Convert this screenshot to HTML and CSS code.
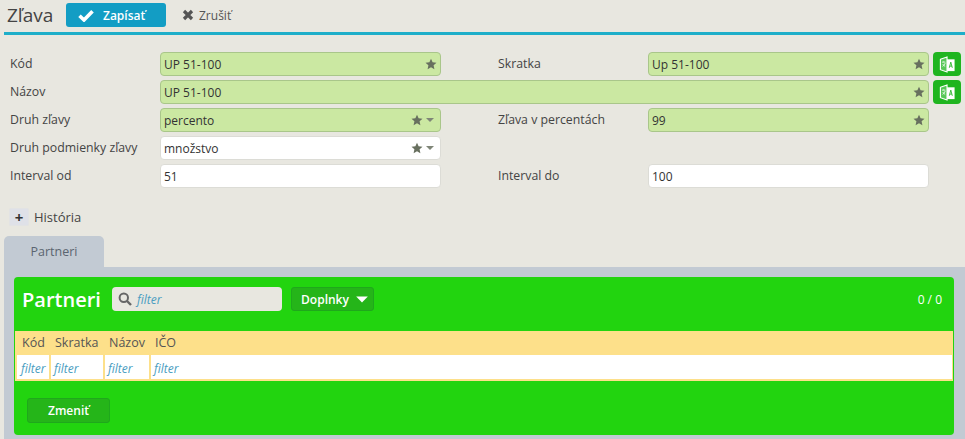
FILE: index.html
```html
<!DOCTYPE html>
<html lang="sk">
<head>
<meta charset="utf-8">
<title>Zľava</title>
<link rel="stylesheet" href="styles.css">
</head>
<body>
<svg class="defs" width="0" height="0" aria-hidden="true">
  <defs>
    <symbol id="star" viewBox="0 0 24 24"><path d="M12 1.5l3.2 7.1 7.8.8-5.8 5.2 1.6 7.7L12 18.4l-6.8 3.9 1.6-7.7L1 9.4l7.8-.8z"/></symbol>
    <symbol id="caret" viewBox="0 0 10 6"><path d="M0 .5h10L5 5.5z"/></symbol>
    <symbol id="lang" viewBox="0 0 18 18"><path d="M1.5 3.5L8.5 1V17L1.5 14.5z" fill="#fff" fill-opacity=".25" stroke="#fff" stroke-width="1.2"/><path d="M8.5 3.5H16.5V16H8.5z" fill="#fff"/><path d="M3.2 6.5h3.6M5 5.7v.8M3.7 11c1.5-.8 2.5-2.2 2.8-3.6M4 8.5c.5 1.2 1.4 2 2.5 2.5" fill="none" stroke="#fff" stroke-width=".8"/><path d="M10.9 12.5l1.6-6 1.6 6M11.4 10.7h2.2" fill="none" stroke="#1fb51f" stroke-width=".9"/></symbol>
  </defs>
</svg>
<header class="topbar">
  <h1 class="title">Zľava</h1>
  <button class="btn-save" type="button">
    <svg class="icon-check" viewBox="0 0 16 13"><path d="M1.5 6.8L6 11 14.5 2.2" fill="none" stroke="#fff" stroke-width="3.6"/></svg>
    <span>Zapísať</span>
  </button>
  <button class="btn-cancel" type="button">
    <svg class="icon-x" viewBox="0 0 12 12"><path d="M2 2l8 8M10 2l-8 8" fill="none" stroke="#555" stroke-width="3.2"/></svg>
    <span>Zrušiť</span>
  </button>
</header>

<main class="form">
  <label class="lbl">Kód</label>
  <div class="field req"><span class="val">UP 51-100</span><svg class="star"><use href="#star"/></svg></div>
  <label class="lbl col3">Skratka</label>
  <div class="field req"><span class="val">Up 51-100</span><svg class="star"><use href="#star"/></svg></div>
  <button class="btn-lang" type="button"><svg class="lang"><use href="#lang"/></svg></button>

  <label class="lbl">Názov</label>
  <div class="field req span4"><span class="val">UP 51-100</span><svg class="star"><use href="#star"/></svg></div>
  <button class="btn-lang" type="button"><svg class="lang"><use href="#lang"/></svg></button>

  <label class="lbl">Druh zľavy</label>
  <div class="field req"><span class="val">percento</span><svg class="star"><use href="#star"/></svg><svg class="caret"><use href="#caret"/></svg></div>
  <label class="lbl col3">Zľava v percentách</label>
  <div class="field req"><span class="val">99</span><svg class="star"><use href="#star"/></svg></div>
  <span class="end"></span>

  <label class="lbl">Druh podmienky zľavy</label>
  <div class="field"><span class="val">množstvo</span><svg class="star"><use href="#star"/></svg><svg class="caret"><use href="#caret"/></svg></div>
  <span class="end-row"></span>

  <label class="lbl">Interval od</label>
  <div class="field"><span class="val">51</span></div>
  <label class="lbl col3">Interval do</label>
  <div class="field"><span class="val">100</span></div>
  <span class="end"></span>
</main>

<div class="history">
  <span class="plus">+</span>
  <span class="history-text">História</span>
</div>

<div class="tabs"><div class="tab">Partneri</div></div>
<section class="tabpanel">
  <div class="panel">
    <div class="panel-head">
      <h2 class="panel-title">Partneri</h2>
      <div class="search">
        <svg class="icon-search" viewBox="0 0 14 14"><circle cx="5.8" cy="5.8" r="4.2" fill="none" stroke="#666" stroke-width="2"/><path d="M9 9l4 4" stroke="#666" stroke-width="2.4"/></svg>
        <span class="filter">filter</span>
      </div>
      <button class="btn-green btn-more" type="button">Doplnky<svg class="caret-w"><use href="#caret"/></svg></button>
      <span class="count">0 / 0</span>
    </div>
    <table class="grid">
      <thead>
        <tr><th>Kód</th><th>Skratka</th><th>Názov</th><th>IČO</th></tr>
      </thead>
      <tbody>
        <tr><td class="filter">filter</td><td class="filter">filter</td><td class="filter">filter</td><td class="filter">filter</td></tr>
      </tbody>
    </table>
    <div class="panel-foot">
      <button class="btn-green btn-change" type="button">Zmeniť</button>
    </div>
  </div>
</section>
</body>
</html>
```
FILE: styles.css
```css
* { box-sizing: border-box; }
html, body { height: 439px; overflow: hidden; }
body {
  margin: 0;
  background: #e8e7e0;
  color: #444;
  font-family: "Open Sans", sans-serif;
  font-size: 12px;
}
button { font-family: inherit; cursor: pointer; }
.defs { display: block; height: 0; }

.topbar {
  display: flex;
  align-items: center;
  height: 35px;
  margin-left: 4px;
  padding: 3px 0 5px 3px;
  border-bottom: 3px solid #1eaec9;
}
.title {
  margin: 0;
  width: 59px;
  font-size: 19px;
  font-weight: 400;
  color: #444;
  line-height: 24px;
}
.btn-save {
  display: flex;
  align-items: center;
  width: 100px;
  height: 24px;
  padding: 0 0 0 12px;
  border: 0;
  border-radius: 3px;
  background: #139dc4;
  color: #fff;
  font-size: 12px;
  font-weight: 600;
}
.icon-check { width: 16px; height: 13px; margin-right: 9px; }
.btn-cancel {
  display: flex;
  align-items: center;
  margin-left: 16px;
  padding: 0;
  border: 0;
  background: none;
  color: #555;
  font-size: 12px;
}
.icon-x { width: 12px; height: 12px; margin-right: 5px; }

.form {
  display: grid;
  grid-template-columns: 150px 281px 57px 150px 281px 32px;
  grid-auto-rows: 25px;
  row-gap: 3px;
  padding: 17px 0 0 10px;
}
.lbl {
  line-height: 23px;
  font-size: 12.3px;
  color: #444;
  white-space: nowrap;
}
.col3 { grid-column: 3 / 5; padding-left: 57px; }
.field {
  display: flex;
  align-items: center;
  height: 24px;
  padding: 0 3px 0 3px;
  border: 1px solid #dcdcd6;
  border-radius: 4px;
  background: #fff;
  color: #333;
}
.req { border-color: #a9c68a; background: #cbe8a2; }
.span4 { grid-column: 2 / 6; }
.val { flex: 1; }
.star { width: 12px; height: 12px; fill: #68705f; }
.field .caret { width: 8px; height: 6px; margin: 0 3px; fill: #7f8577; }
.btn-lang {
  display: flex;
  align-items: center;
  justify-content: center;
  width: 28px;
  height: 24px;
  margin-left: 4px;
  padding: 0;
  border: 0;
  border-radius: 4px;
  background: #1fb51f;
}
.lang { width: 17px; height: 17px; }
.end-row { grid-column: 3 / 7; }

.history {
  display: flex;
  align-items: center;
  height: 18px;
  margin: 19px 0 0 9px;
}
.plus {
  width: 20px;
  height: 18px;
  border: 1px solid #e2e3e4;
  border-radius: 2px;
  background: #dfe1e8;
  color: #333;
  font-size: 15px;
  font-weight: 700;
  line-height: 16px;
  text-align: center;
}
.history-text { margin-left: 5px; font-size: 13px; color: #444; }

.tabs { margin: 10px 0 0 4px; }
.tab {
  width: 100px;
  height: 31px;
  border-radius: 5px 5px 0 0;
  background: #c2cad3;
  color: #5b6570;
  font-size: 12.5px;
  line-height: 31px;
  text-align: center;
}
.tabpanel {
  margin-left: 4px;
  padding: 10px 11px 4px 10px;
  background: #c2cad3;
}
.panel {
  height: 158px;
  border-radius: 4px;
  background: #22d40f;
}
.panel-head {
  display: flex;
  align-items: center;
  height: 54px;
  padding: 0 12px 10px 8px;
}
.panel-title {
  margin: 0;
  width: 90px;
  color: #fff;
  font-size: 20px;
  font-weight: 600;
}
.search {
  display: flex;
  align-items: center;
  width: 170px;
  height: 24px;
  padding-left: 6px;
  border-radius: 4px;
  background: #e8e7e0;
}
.icon-search { width: 14px; height: 14px; margin-right: 5px; }
.filter {
  color: #4a9dc0;
  font-size: 12px;
  font-style: italic;
}
.btn-green {
  border: 1px solid #1fa81c;
  border-radius: 3px;
  background: #25b519;
  color: #fff;
  font-size: 12px;
  font-weight: 600;
}
.btn-more {
  display: flex;
  align-items: center;
  justify-content: center;
  width: 83px;
  height: 24px;
  margin-left: 9px;
  padding: 0 0 0 4px;
}
.caret-w { width: 12px; height: 7px; margin-left: 7px; fill: #fff; }
.count { margin-left: auto; color: #fff; font-size: 12px; }

.grid {
  display: block;
  margin-left: 1px;
  width: 938px;
  border-collapse: separate;
  border-spacing: 0;
  background: #fde08a;
  padding-bottom: 2px;
}
.grid thead, .grid tbody { display: block; }
.grid tr { display: grid; grid-template-columns: 35px 54px 46px 1fr; }
.grid th {
  height: 24px;
  padding-left: 5px;
  color: #555;
  font-size: 12.5px;
  font-weight: 400;
  line-height: 22px;
  text-align: left;
}
.grid th:first-child { padding-left: 7px; }
.grid td {
  height: 24px;
  margin: 0 1px;
  padding-left: 3px;
  background: #fff;
  line-height: 25px;
}
.grid td:first-child { margin-left: 2px; padding-left: 4px; }
.panel-foot { padding: 17px 0 0 13px; }
.btn-change {
  width: 83px;
  height: 25px;
  padding: 0;
}
```
